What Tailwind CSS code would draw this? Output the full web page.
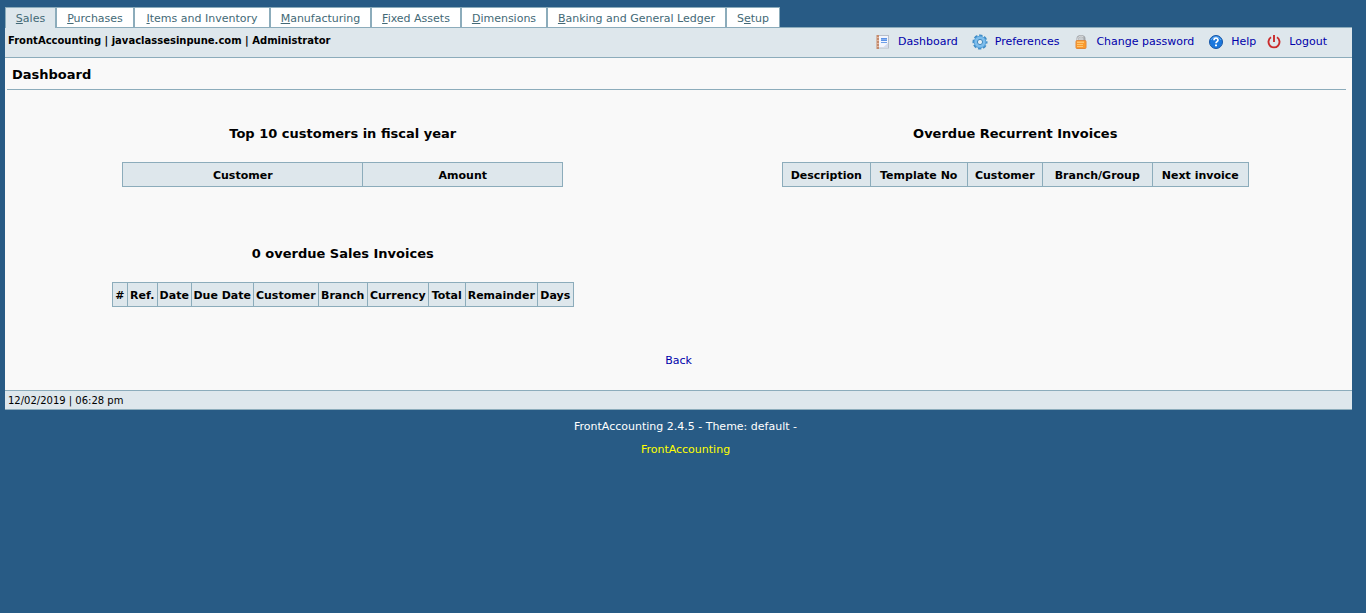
<!DOCTYPE html>
<html lang="en">
<head>
<meta charset="utf-8">
<title>FrontAccounting - Dashboard</title>
<script src="https://cdn.jsdelivr.net/npm/@tailwindcss/browser@4"></script>
</head>
<body class="bg-[#285b85] pt-[7px] pr-[14px] pl-[5px] font-['Verdana','DejaVu_Sans',sans-serif] text-[11px] leading-4 text-black">
<nav class="flex text-[#436976] *:h-5 *:border *:border-b-0 *:border-[#8cacbb] *:bg-white *:text-center *:leading-[22px] *:whitespace-nowrap">
  <a href="#" class="w-[51px] !bg-[#dee7ec]"><u>S</u>ales</a>
  <a href="#" class="w-[78px]"><u>P</u>urchases</a>
  <a href="#" class="w-[136px]"><u>I</u>tems and Inventory</a>
  <a href="#" class="w-[101px]"><u>M</u>anufacturing</a>
  <a href="#" class="w-[90px]"><u>F</u>ixed Assets</a>
  <a href="#" class="w-[86px]"><u>D</u>imensions</a>
  <a href="#" class="w-[179px]"><u>B</u>anking and General Ledger</a>
  <a href="#" class="w-[54px]">S<u>e</u>tup</a>
</nav>
<div class="flex">
  <div class="h-px w-[51px] border-x border-[#8cacbb] bg-[#dee7ec]"></div>
  <div class="h-px flex-1 bg-[#8cacbb]"></div>
</div>
<header class="flex h-[30px] justify-between border-b border-[#8cacbb] bg-[#dee7ec] pr-[25px] pl-[3px]">
  <div class="pt-[5px] text-[10px] font-bold">FrontAccounting | javaclassesinpune.com | Administrator</div>
  <div class="flex items-center gap-[14px] pb-[2px] text-[#0000aa] *:flex *:items-center *:gap-[7px]">
    <a href="#"><svg class="size-4" viewBox="0 0 16 16"><path d="M2 1h12v13.500H2z" fill="#b9bfc9"/><path d="M4 2h9v11.500H4z" fill="#f3f6fd"/><path d="M13 9v4.500H8z" fill="#d5dcec"/><path d="M1.500 1h2.500v14H1.500z" fill="#c48a6c"/><path d="M1.500 3.500H4M1.500 6.500H4M1.500 9.500H4M1.500 12.500H4" stroke="#dfb7a0"/><path d="M6 4h6v3H6z" fill="#5b92e6"/><path d="M6 8.500h6" stroke="#6f9fe8"/><path d="M6 5.500h6" stroke="#86b0ef"/></svg>Dashboard</a>
    <a href="#"><svg class="size-4" viewBox="0 0 16 16"><circle cx="8" cy="8" r="6.400" fill="none" stroke="#3f8cc6" stroke-width="2.200" stroke-dasharray="3.300 1.727" stroke-dashoffset="1.650"/><circle cx="8" cy="8" r="4.300" fill="none" stroke="#7dbdec" stroke-width="3.600"/><circle cx="8" cy="8" r="5.800" fill="none" stroke="#5aa3da"/><circle cx="8" cy="8" r="2.600" fill="#e6eef3" stroke="#3f87bd"/></svg>Preferences</a>
    <a href="#"><svg class="size-4" viewBox="0 0 16 16"><path d="M4.500 8V4.500C4.500 1 11.500 1 11.500 4.500V8" fill="#c9cdd0" stroke="#a2a6aa" stroke-width="2"/><path d="M4.700 6V4.500C5 2 9 1.500 10.500 3" fill="none" stroke="#e3e4e5"/><rect x="3" y="6.500" width="10" height="8" rx="1" fill="#fb9b2c" stroke="#e0893c"/><path d="M4 7.500h7v1.500H4zM4 10h6v1H4zM4 12h6v1H4z" fill="#ffc46f"/></svg>Change password</a>
    <a href="#"><svg class="size-4" viewBox="0 0 16 16"><circle cx="8" cy="8" r="6.500" fill="#1b78dd" stroke="#1656a6"/><path d="M3 6a5.500 5.500 0 0 1 10 0" fill="none" stroke="#66aef2"/><path d="M6 6.300C6 3.500 10 3.600 10 6.100C10 7.700 8 7.700 8 9.300" fill="none" stroke="white" stroke-width="1.700"/><path d="M7 10.500h2v1.800H7z" fill="white"/></svg>Help</a>
    <a href="#" class="-ml-1"><svg class="size-4" viewBox="0 0 16 16"><path d="M5 3.300a5.500 5.500 0 1 0 6 0" fill="none" stroke="#ca2b2b" stroke-width="1.900"/><path d="M8 1v7" stroke="#ca2b2b" stroke-width="1.900"/></svg>Logout</a>
  </div>
</header>
<main class="bg-[#f9f9f9]">
  <h1 class="mr-[6px] ml-[2px] h-8 border-b border-[#8cacbb] pl-[5px] text-[13px] leading-[34px] font-bold">Dashboard</h1>
  <div class="grid grid-cols-2 pt-9 text-center [&_h2]:text-[13px] [&_h2]:leading-4 [&_h2]:font-bold [&_table]:mx-auto [&_table]:mt-5 [&_table]:table-fixed [&_table]:border-collapse [&_th]:h-6 [&_th]:border [&_th]:border-[#8cacbb] [&_th]:bg-[#dee7ec] [&_th]:p-0 [&_th]:pt-[2px] [&_th]:whitespace-nowrap">
    <div class="flex flex-col gap-[59px] pl-[2px]">
      <section>
        <h2>Top 10 customers in fiscal year</h2>
        <table class="w-[441px]"><thead><tr><th class="w-[240px]">Customer</th><th>Amount</th></tr></thead></table>
      </section>
      <section>
        <h2>0 overdue Sales Invoices</h2>
        <table class="w-[462px]"><thead><tr><th class="w-[15px]">#</th><th class="w-[30px]">Ref.</th><th class="w-[34px]">Date</th><th class="w-[62px]">Due Date</th><th class="w-[65px]">Customer</th><th class="w-[49px]">Branch</th><th class="w-[61px]">Currency</th><th class="w-[37px]">Total</th><th class="w-[72px]">Remainder</th><th class="w-[36px]">Days</th></tr></thead></table>
      </section>
    </div>
    <section>
      <h2>Overdue Recurrent Invoices</h2>
      <table class="w-[467px]"><thead><tr><th class="w-[88px]">Description</th><th class="w-[97px]">Template No</th><th class="w-[75px]">Customer</th><th class="w-[110px]">Branch/Group</th><th class="w-[96px]">Next invoice</th></tr></thead></table>
    </section>
  </div>
  <div class="pt-[46px] pb-[21px] text-center"><a href="#" class="text-[#0000aa]">Back</a></div>
</main>
<div class="h-5 border-y border-[#8cacbb] bg-[#dee7ec] pl-[3px] text-[10px] leading-5">12/02/2019 | 06:28 pm</div>
<footer class="flex flex-col items-center gap-[7px] pt-[9px] pl-[14px] text-white">
  <div>FrontAccounting 2.4.5 - Theme: default -</div>
  <a href="#" class="text-[#ffff00]">FrontAccounting</a>
</footer>
</body>
</html>
